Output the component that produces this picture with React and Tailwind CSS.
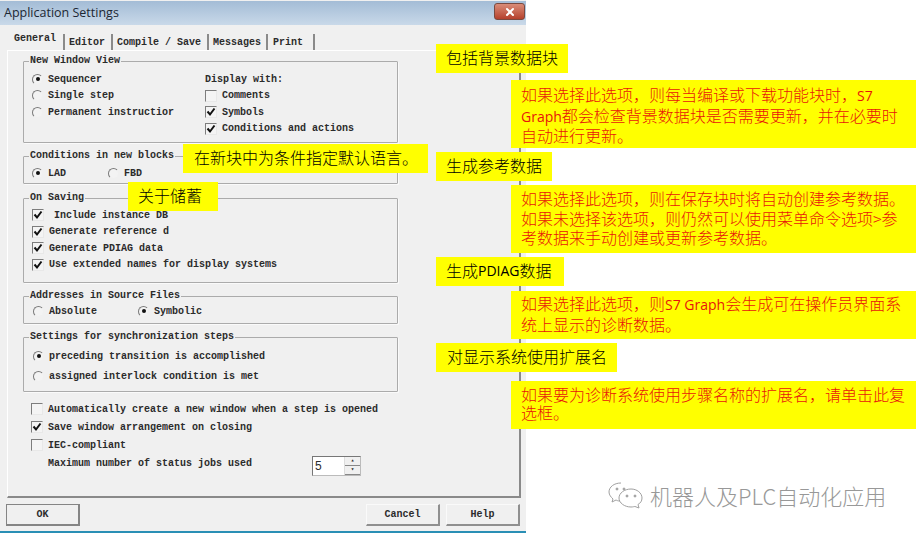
import React from 'react';
import { X } from 'lucide-react';

const cjk = "font-['Noto_Sans_CJK_SC','Liberation_Sans',sans-serif]";

function Check({ checked }) {
  return (
    <span className="flex w-[12px] h-[12px] shrink-0 items-center justify-center border border-t-[#7d7d7d] border-l-[#7d7d7d] border-r-[#e8e8e8] border-b-[#e8e8e8] bg-[#f4f4f4]">
      {checked && (
        <svg width="10" height="10" viewBox="0 0 10 10">
          <path d="M1.5 4.5 L4 7.5 L8.5 1.5" fill="none" stroke="#111" strokeWidth="2" />
        </svg>
      )}
    </span>
  );
}

function Radio({ checked }) {
  return (
    <span className="flex w-[11px] h-[11px] shrink-0 items-center justify-center rounded-full border border-t-[#7a7a7a] border-l-[#7a7a7a] border-r-[#f0f0f0] border-b-[#f0f0f0] bg-[#f3f3f3]">
      {checked && <span className="w-[4px] h-[4px] rounded-full bg-[#111]" />}
    </span>
  );
}

function Row({ type, checked, label, className = '' }) {
  return (
    <div className={`flex items-center gap-[5px] h-[16.5px] whitespace-nowrap ${className}`}>
      {type === 'radio' ? <Radio checked={checked} /> : <Check checked={checked} />}
      <span>{label}</span>
    </div>
  );
}

function Group({ title, className = '', children }) {
  return (
    <fieldset className={`ml-[15px] w-[375px] border border-[#ababab] rounded-[1px] shadow-[1px_1px_0_#fafafa] ${className}`}>
      <legend className="ml-[5px] px-[1px] leading-[12px]">{title}</legend>
      {children}
    </fieldset>
  );
}

function Btn({ children, className = '' }) {
  return (
    <button className={`h-[22px] flex items-center justify-center border-r-2 border-b-2 border-t border-l ${className}`}>
      {children}
    </button>
  );
}

function Label({ children, className = '' }) {
  return (
    <div className={`h-[29px] pb-[3px] flex items-center bg-[#ffff00] text-[16px] font-light text-black whitespace-nowrap ${className}`}>
      {children}
    </div>
  );
}

function Latin({ children }) {
  return <span className="font-['Open_Sans',sans-serif] font-normal text-[14px]">{children}</span>;
}

function Note({ className = '', children }) {
  return (
    <div className={`ml-[75px] w-[405px] pl-[10px] bg-[#ffff00] text-[16px] font-light text-[#e8140a] whitespace-nowrap ${className}`}>
      {children}
    </div>
  );
}

export default function App() {
  return (
    <div className="relative w-[917px] h-[535px] bg-white overflow-hidden">
      {/* Dialog */}
      <div className="w-[526px] h-[533px] bg-[#f0f0f0] border-b-2 border-[#2a8fb5] flex flex-col font-['Liberation_Mono',monospace] font-bold text-[10px] text-[#2b2b2b]">
        <div className="h-[24px] mt-[1px] shrink-0 flex items-center justify-between pl-[4px] pr-[1px] bg-gradient-to-b from-[#a3bcd6] to-[#c9d9e9]">
          <span className="font-['Open_Sans',sans-serif] font-normal text-[12.5px] text-[#1c2733]">Application Settings</span>
          <span className="w-[31px] h-[17px] flex items-center justify-center rounded-[3px] border border-[#7a4a40] bg-gradient-to-b from-[#d98c78] to-[#b5402c] mb-[3px]">
            <X size={12} strokeWidth={4} color="#fff" />
          </span>
        </div>

        {/* Tabs */}
        <div className="h-[25px] shrink-0 flex items-end pl-[5px]">
          <span className="w-[58px] pl-[9px] h-[16px] -mt-[3px] leading-[10px]">General</span>
          <span className="w-[48px] h-[16px] pl-[4px] border-l-2 border-[#8a8a8a] flex items-center">Editor</span>
          <span className="w-[96px] h-[16px] pl-[4px] border-l-2 border-[#8a8a8a] flex items-center">Compile / Save</span>
          <span className="w-[59px] h-[16px] pl-[4px] border-l-2 border-[#8a8a8a] flex items-center">Messages</span>
          <span className="w-[49px] h-[16px] pl-[5px] border-x-2 border-[#8a8a8a] flex items-center">Print</span>
        </div>

        {/* Panel */}
        <div className="w-[514px] ml-[7px] h-[448px] shrink-0 border-t border-t-white border-l border-l-white border-r-2 border-b-2 border-r-[#8a8a8a] border-b-[#8a8a8a] pt-[4px]">
          <Group title="New Window View" className="h-[88px]">
            <div className="flex pl-[8px] pt-[4px]">
              <div className="w-[173px]">
                <Row type="radio" checked label="Sequencer" />
                <Row type="radio" label="Single step" />
                <Row type="radio" label="Permanent instructior" />
              </div>
              <div>
                <div className="h-[16.5px] flex items-center">Display with:</div>
                <Row label="Comments" />
                <Row checked label="Symbols" />
                <Row checked label="Conditions and actions" />
              </div>
            </div>
          </Group>

          <Group title="Conditions in new blocks" className="h-[34px] mt-[7px]">
            <div className="flex pl-[8px] pt-[3px]">
              <Row type="radio" checked label="LAD" className="w-[76px]" />
              <Row type="radio" label="FBD" />
            </div>
          </Group>

          <Group title="On Saving" className="h-[91px] mt-[8px]">
            <div className="pl-[8px] pt-[3px]">
              <Row checked label={<span className="pl-[5px]">Include instance DB</span>} />
              <Row checked label="Generate reference d" />
              <Row checked label="Generate PDIAG data" />
              <Row checked label="Use extended names for display systems" />
            </div>
          </Group>

          <Group title="Addresses in Source Files" className="h-[34px] mt-[7px]">
            <div className="flex pl-[9px] pt-[1px]">
              <Row type="radio" label="Absolute" className="w-[105px]" />
              <Row type="radio" checked label="Symbolic" />
            </div>
          </Group>

          <Group title="Settings for synchronization steps" className="h-[61px] mt-[7px]">
            <div className="pl-[9px] pt-[3px]">
              <Row type="radio" checked label="preceding transition is accomplished" className="h-[20px]" />
              <Row type="radio" label="assigned interlock condition is met" className="h-[20px]" />
            </div>
          </Group>

          <div className="ml-[23px] mt-[8px]">
            <Row label="Automatically create a new window when a step is opened" className="h-[18px]" />
            <Row checked label="Save window arrangement on closing" className="h-[18px]" />
            <Row label="IEC-compliant" className="h-[18px]" />
            <div className="flex items-center h-[18px] pl-[17px]">
              <span className="w-[264px]">Maximum number of status jobs used</span>
              <div className="w-[49px] h-[20px] mt-[5px] flex border border-t-[#777] border-l-[#777] border-r-[#bbb] border-b-[#bbb] bg-white">
                <span className="flex-1 pl-[2px] leading-[18px] font-['Liberation_Sans',sans-serif] font-normal text-[12px]">5</span>
                <div className="w-[16px] flex flex-col bg-[#f0f0f0] border-l border-[#ddd]">
                  <span className="flex-1 flex items-center justify-center border-b border-[#888] leading-none text-[6px]">▴</span>
                  <span className="flex-1 flex items-center justify-center border-b border-[#888] leading-none text-[6px]">▾</span>
                </div>
              </div>
            </div>
          </div>
        </div>

        {/* Buttons */}
        <div className="flex pl-[6px] pr-[6px] pt-[6px]">
          <Btn className="w-[74px] border-[#858585]">OK</Btn>
          <Btn className="w-[74px] ml-auto border-r-[#8f8f8f] border-b-[#8f8f8f] border-t-[#fafafa] border-l-[#fafafa]">Cancel</Btn>
          <Btn className="w-[74px] ml-[6px] border-r-[#8f8f8f] border-b-[#8f8f8f] border-t-[#fafafa] border-l-[#fafafa]">Help</Btn>
        </div>
      </div>

      {/* Callouts on the dialog */}
      <Label className={`absolute left-[183px] top-[144px] w-[245px] pl-[11px] ${cjk}`}>在新块中为条件指定默认语言。</Label>
      <Label className={`absolute left-[128px] top-[182px] w-[90px] pl-[10px] ${cjk}`}>关于储蓄</Label>

      {/* Explanation column */}
      <div className={`absolute left-[436px] top-[44px] w-[480px] ${cjk}`}>
        <Label className="w-[132px] pl-[10px]">包括背景数据块</Label>
        <Note className="mt-[7px] h-[68px] pt-[5px] leading-[19.5px]">
          <div>如果选择此选项，则每当编译或下载功能块时，<Latin>S7</Latin></div>
          <div><Latin>Graph</Latin>都会检查背景数据块是否需要更新，并在必要时</div>
          <div>自动进行更新。</div>
        </Note>
        <Label className="mt-[4px] w-[116px] pl-[10px]">生成参考数据</Label>
        <Note className="mt-[4px] h-[68px] pt-[4px] leading-[19.5px]">
          <div>如果选择此选项，则在保存块时将自动创建参考数据。</div>
          <div>如果未选择该选项，则仍然可以使用菜单命令选项&gt;参</div>
          <div>考数据来手动创建或更新参考数据。</div>
        </Note>
        <Label className="mt-[4px] w-[128px] pl-[10px]">生成<Latin>PDIAG</Latin>数据</Label>
        <Note className="mt-[5px] h-[48px] pt-[3px] leading-[18.5px]">
          <div>如果选择此选项，则<Latin>S7 Graph</Latin>会生成可在操作员界面系</div>
          <div>统上显示的诊断数据。</div>
        </Note>
        <Label className="mt-[4px] w-[181px] pl-[11px]">对显示系统使用扩展名</Label>
        <Note className="mt-[9px] h-[48px] pt-[5px] leading-[17.5px]">
          <div>如果要为诊断系统使用步骤名称的扩展名，请单击此复</div>
          <div>选框。</div>
        </Note>
      </div>

      {/* Watermark */}
      <div className={`absolute left-[608px] top-[479px] flex items-center gap-[7px] ${cjk}`}>
        <svg width="35" height="27" viewBox="0 0 35 27" fill="none" stroke="#a0a0a0" strokeWidth="1">
          <path d="M13 1 C6 1 1 5 1 10 C1 13 3 15 5 17 L4 20 L8 18 C9 18.500 10 19 12 19" />
          <path d="M23 7 C16.500 7 11 11 11 16 C11 21 16.500 25 23 25 C25 25 26 24.500 27 24.500 L31 26 L30 22.500 C32.500 21 34 19 34 16 C34 11 29 7 23 7 Z" />
          <circle cx="9" cy="7" r="1" fill="#a0a0a0" />
          <circle cx="16" cy="7" r="1" fill="#a0a0a0" />
          <circle cx="19" cy="14" r="1" fill="#a0a0a0" />
          <circle cx="27" cy="14" r="1" fill="#a0a0a0" />
        </svg>
        <span className="text-[22px] font-light text-[#989898] whitespace-nowrap">机器人及PLC自动化应用</span>
      </div>
    </div>
  );
}
